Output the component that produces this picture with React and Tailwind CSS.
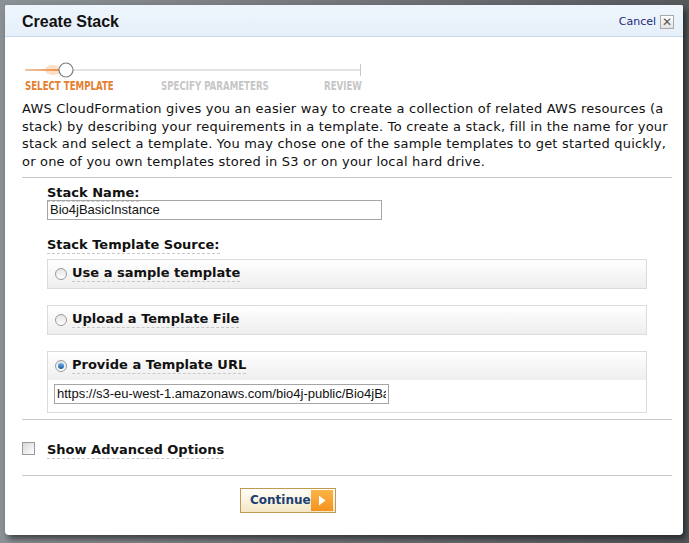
import React from 'react';

const verdana = { fontFamily: '"DejaVu Sans", Verdana, sans-serif' };
const arial = { fontFamily: '"Liberation Sans", Arial, sans-serif' };

function Radio({ checked }) {
  return (
    <span className="flex h-[12px] w-[12px] shrink-0 items-center justify-center rounded-full border border-[#9a9a9a] bg-gradient-to-b from-[#e4e4e4] to-[#ffffff]">
      {checked && (
        <span className="h-[6px] w-[6px] rounded-full bg-gradient-to-b from-[#6fb6f0] to-[#14589e]" />
      )}
    </span>
  );
}

function Label({ children }) {
  return (
    <span className="border-b border-dashed border-[#c8c8c8] pb-[1px] text-[13px] font-bold leading-[15px] text-[#111]" style={verdana}>
      {children}
    </span>
  );
}

function SourceBox({ label, checked, children }) {
  return (
    <div className="w-[600px] border border-[#dcdcdc] bg-white">
      <div className="flex h-[28px] items-center gap-[5px] bg-gradient-to-b from-[#ffffff] to-[#eeeeee] pl-[7px] leading-[15px]">
        <Radio checked={checked} />
        <Label>{label}</Label>
      </div>
      {children}
    </div>
  );
}

function Stepper() {
  return (
    <div className="ml-[3px] mt-[25px]">
      <svg width="345" height="16" viewBox="0 0 345 16" className="block">
        <defs>
          <linearGradient id="glow" x1="0" x2="1" y1="0" y2="0">
            <stop offset="0" stopColor="#f6a86a" stopOpacity="0.5" />
            <stop offset="1" stopColor="#f08a3c" stopOpacity="1" />
          </linearGradient>
        </defs>
        <line x1="0" y1="8" x2="335" y2="8" stroke="#c8c8c8" strokeWidth="1" />
        <rect x="0" y="7" width="34" height="2" fill="url(#glow)" />
        <ellipse cx="28" cy="8" rx="8" ry="5" fill="#f5a464" opacity="0.35" />
        <circle cx="41" cy="8" r="7" fill="#ffffff" stroke="#7d7d7d" strokeWidth="1.2" />
        <line x1="335.5" y1="2" x2="335.5" y2="14" stroke="#c8c8c8" strokeWidth="1" />
      </svg>
      <div className="mt-[1px] flex h-[14px] text-[12px] font-bold leading-[14px]" style={{ fontFamily: '"DejaVu Sans Condensed", "Liberation Sans Narrow", "Liberation Sans", sans-serif' }}>
        <span className="w-[136px]">
          <span className="inline-block origin-left scale-x-[0.8] whitespace-nowrap text-[#e4802f]">SELECT TEMPLATE</span>
        </span>
        <span className="w-[163px]">
          <span className="inline-block origin-left scale-x-[0.8] whitespace-nowrap text-[#c6c6c6]">SPECIFY PARAMETERS</span>
        </span>
        <span>
          <span className="inline-block origin-left scale-x-[0.8] whitespace-nowrap text-[#c6c6c6]">REVIEW</span>
        </span>
      </div>
    </div>
  );
}

export default function App() {
  return (
    <div className="h-[543px] w-[689px] overflow-hidden bg-gradient-to-r from-[#8c9196] via-[#72767a] to-[#55595c] pl-[5px] pt-[5px]">
      <div className="flex h-[530px] w-[678px] flex-col overflow-hidden rounded-b-[4px] rounded-t-[2px] bg-white shadow-[3px_4px_6px_rgba(0,0,0,0.55)]">
        {/* Header */}
        <div className="flex h-[32px] shrink-0 items-center justify-between border-b border-[#c6d9ec] bg-gradient-to-b from-[#eef5fc] to-[#e6f0fa] pl-[17px] pr-[9px] pt-[3px]">
          <span className="text-[16px] font-bold text-[#111]" style={arial}>Create Stack</span>
          <div className="flex items-center gap-[4px]">
            <span className="text-[11px] text-[#1c2a7a]" style={verdana}>Cancel</span>
            <span className="flex h-[14px] w-[14px] items-center justify-center border border-[#a9a9a9] bg-gradient-to-b from-[#ffffff] to-[#e2e2e2] text-[12px] leading-none text-[#555]" style={arial}>
              ✕
            </span>
          </div>
        </div>

        {/* Body */}
        <div className="flex flex-col pl-[17px] pr-[11px]">
          <Stepper />

          <p className="mt-[7px] text-[13px] leading-[17.7px] tracking-[0.2px] text-[#111]" style={verdana}>
            AWS CloudFormation gives you an easier way to create a collection of related AWS resources (a
            stack) by describing your requirements in a template. To create a stack, fill in the name for your
            stack and select a template. You may chose one of the sample templates to get started quickly,
            or one of you own templates stored in S3 or on your local hard drive.
          </p>

          <div className="mt-[6px] border-t border-[#c8c8c8]" />

          <div className="flex flex-col pl-[25px]">
            <div className="mt-[6px] h-[15px] leading-[15px]">
              <Label>Stack Name:</Label>
            </div>
            <input
              readOnly
              value="Bio4jBasicInstance"
              className="mt-[1px] h-[20px] w-[335px] border border-[#a5a5a5] px-[2px] text-[13px] text-[#111] outline-none"
              style={arial}
            />

            <div className="mt-[16px] h-[15px] leading-[15px]">
              <Label>Stack Template Source:</Label>
            </div>

            <div className="mt-[8px] flex flex-col gap-[16px]">
              <SourceBox label="Use a sample template" />
              <SourceBox label="Upload a Template File" />
              <SourceBox label="Provide a Template URL" checked>
                <div className="px-[6px] pb-[8px] pt-[4px]">
                  <input
                    readOnly
                    value="https://s3-eu-west-1.amazonaws.com/bio4j-public/Bio4jBasicInstance"
                    className="block h-[20px] w-[335px] border border-[#a5a5a5] px-[2px] text-[13px] text-[#111] outline-none"
                    style={arial}
                  />
                </div>
              </SourceBox>
            </div>
          </div>

          <div className="mt-[6px] border-t border-[#c8c8c8]" />

          <div className="flex h-[55px] items-center leading-[15px]">
            <span className="mt-[2px] h-[13px] w-[13px] shrink-0 border border-[#9a9a9a] bg-gradient-to-br from-[#d8d8d8] to-[#ffffff]" />
            <span className="ml-[12px] mt-[4px]">
              <Label>Show Advanced Options</Label>
            </span>
          </div>

          <div className="border-t border-[#c8c8c8]" />

          <div className="ml-[218px] mt-[12px]">
            <button className="flex h-[25px] w-[96px] items-center justify-between border border-[#c09a52] bg-gradient-to-b from-[#fffef8] to-[#f4e7c6] pl-[9px] pr-[2px]" style={verdana}>
              <span className="text-[12px] font-bold text-[#1b3f73]">Continue</span>
              <span className="flex h-[21px] w-[24px] items-center justify-center bg-gradient-to-b from-[#fbb446] to-[#f5921c]">
                <svg width="8" height="11" viewBox="0 0 8 11">
                  <polygon points="1,0.5 7.5,5.5 1,10.5" fill="#ffffff" />
                </svg>
              </span>
            </button>
          </div>
        </div>
      </div>
    </div>
  );
}
